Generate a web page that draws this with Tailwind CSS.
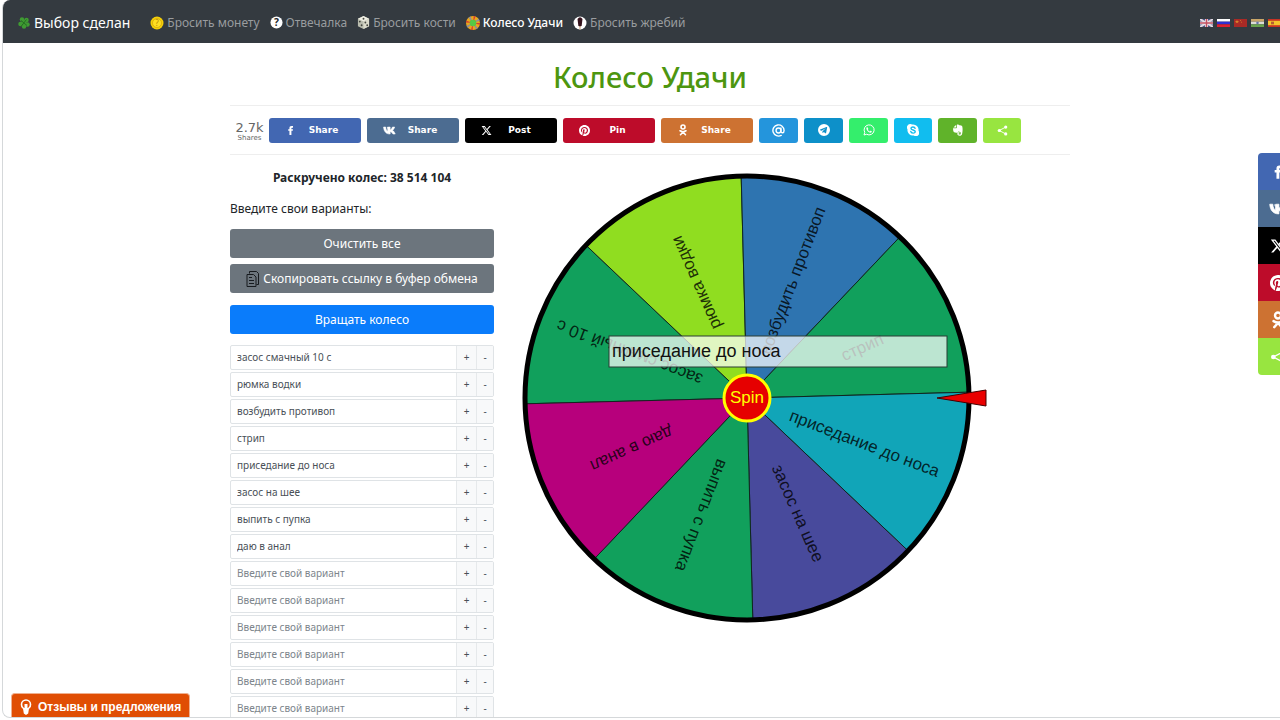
<!doctype html>
<html lang="ru">
  <head>
    <title>Колесо Удачи</title>
    <meta charset="UTF-8" />
    <meta name="viewport" content="width=device-width, initial-scale=1.0" />
    <script src="https://cdn.jsdelivr.net/npm/@tailwindcss/browser@4"></script>
  </head>
  <body class="h-screen overflow-hidden bg-white pl-[2px] pb-[2px] font-['Noto_Sans','Open_Sans',sans-serif] text-[#212529]">
    <!-- Icon sprite -->
    <svg class="hidden" xmlns="http://www.w3.org/2000/svg">
      <symbol id="facebook" viewBox="0 0 24 24">
        <path fill="currentColor" d="M14 9V7.200c0-.8.3-1.200 1.300-1.200H17.500V2.200h-3.300C11 2.200 9.700 4 9.700 6.700V9H7v3.800h2.700V22H14v-9.200h3L17.500 9z" />
      </symbol>
      <symbol id="vk" viewBox="0 0 24 24">
        <path fill="currentColor" stroke="currentColor" stroke-width="1" stroke-linejoin="round" d="M12.500 18.500C5.500 18.500 1.500 13.500 1 5.600h4c.3 4.600 2 7.200 3.700 8V9.500c0-1.500-.5-2.300-1.400-2.800.8-.9 2-1.100 3.600-1.100h2.300v5.300c1.900-.6 3.400-2.900 4.200-5.300h4.200c-.7 2.900-2.400 4.900-4 6.100 1.800 1.200 3.600 3.300 5 6.800h-4.300c-1-2.300-2.700-4-5.100-4.400v4.400z" />
      </symbol>
      <symbol id="x" viewBox="0 0 24 24">
        <path fill="currentColor" d="M18.244 2.250h3.308l-7.227 8.260 8.502 11.240H16.170l-5.214-6.817L4.990 21.750H1.680l7.730-8.835L1.254 2.250H8.080l4.713 6.231zm-1.161 17.520h1.833L7.084 4.126H5.117z" />
      </symbol>
      <symbol id="pinterest" viewBox="0 0 24 24">
        <path fill="currentColor" d="M12 0C5.373 0 0 5.372 0 12c0 5.084 3.163 9.426 7.627 11.174-.105-.949-.2-2.405.042-3.441.218-.937 1.407-5.965 1.407-5.965s-.359-.719-.359-1.782c0-1.668.967-2.914 2.171-2.914 1.023 0 1.518.769 1.518 1.690 0 1.029-.655 2.568-.994 3.995-.283 1.194.599 2.169 1.777 2.169 2.133 0 3.772-2.249 3.772-5.495 0-2.873-2.064-4.882-5.012-4.882-3.414 0-5.418 2.561-5.418 5.207 0 1.031.397 2.138.893 2.738.1.100.110.230.083.345l-.333 1.360c-.053.220-.174.267-.402.161-1.499-.698-2.436-2.889-2.436-4.649 0-3.785 2.750-7.262 7.929-7.262 4.163 0 7.398 2.967 7.398 6.931 0 4.136-2.607 7.464-6.227 7.464-1.216 0-2.359-.631-2.750-1.378l-.748 2.853c-.271 1.043-1.002 2.350-1.492 3.146C9.570 23.812 10.763 24 12 24c6.627 0 12-5.373 12-12S18.627 0 12 0z" />
      </symbol>
      <symbol id="ok" viewBox="0 0 24 24">
        <g fill="none" stroke="currentColor" stroke-width="3.200" stroke-linecap="round">
          <circle cx="12" cy="6" r="4" />
          <path d="M6 13.500q6 3.800 12 0M12 16l-5 5.500M12 16l5 5.500" />
        </g>
      </symbol>
      <symbol id="mail" viewBox="0 0 24 24">
        <g fill="none" stroke="currentColor" stroke-width="2.600" stroke-linecap="round">
          <circle cx="12" cy="12" r="4.500" />
          <path d="M16.500 7.500V13.500c0 4 5.800 3.800 5.800-1.500A10.300 10.300 0 1 0 17 21" />
        </g>
      </symbol>
      <symbol id="telegram" viewBox="0 0 24 24">
        <path fill="currentColor" fill-rule="evenodd" d="M12 0a12 12 0 1 0 0 24 12 12 0 0 0 0-24zM18.300 6.500 16.200 18c-.2.900-.7 1-1.300.7l-3.400-2.500-1.700 1.700c-.3.300-.8.200-.8-.4v-3.200l7-6.300-8.700 5.400-3-1c-.8-.3-.8-.9.100-1.200L17 6c.8-.3 1.500-.2 1.300.5z" />
      </symbol>
      <symbol id="whatsapp" viewBox="0 0 24 24">
        <path fill="none" stroke="currentColor" stroke-width="2" stroke-linejoin="round" d="M2 22l1.500-5.300A10 10 0 1 1 7.300 20.500z" />
        <path fill="currentColor" d="M8.600 6.600c-.9 0-2 1-1.800 2.700.3 3.400 4.400 7.700 7.800 8.100 1.700.2 3-.9 3-2.200 0-.5-2.200-1.700-2.700-1.500-.5.200-1 1.500-1.500 1.400-1.400-.5-3.100-2-3.800-3.600-.1-.5 1-1 1-1.600 0-.4-.9-2.600-1.200-3z" />
      </symbol>
      <symbol id="skype" viewBox="0 0 24 24">
        <path fill="currentColor" d="M7 0a6.700 6.700 0 0 1 3.400 1A11 11 0 0 1 23 13.600 6.700 6.700 0 0 1 13.600 23 11 11 0 0 1 1 10.400 6.700 6.700 0 0 1 7 0z" />
        <path fill="none" stroke="#11bdef" stroke-width="2.800" stroke-linecap="round" d="M16.200 8.600C15.500 5.500 8 5 8 8.800c0 4 8.500 2.200 8.500 6.300 0 4.200-8.300 4-9-.2" />
      </symbol>
      <symbol id="evernote" viewBox="0 0 24 24">
        <path fill="currentColor" d="M8.500 1.500v4.300c0 .9-.6 1.400-1.500 1.400H2.800zM2 8.700h5.500c1.600 0 2.500-.9 2.500-2.500V1c1.800-.3 4 0 4.500 1.700 2.200.3 5.200.5 5.900 1.600 1.300 4 .9 10.700-.1 15.200-.5 2.900-2.400 4-5 4-3.400 0-4.700-1.600-4.700-3.800 0-2.300 2-3.500 4.400-3.200v2.200c-1.300-.1-1.900.2-1.900 1.100 0 1 .9 1.400 2.200 1.400 2 0 2.200-1.200 2.200-3.200 0-1.400-.7-2.400-2.700-2.600-1 0-1.700-.2-2-.8-.3 2.400-1.700 3.400-4.200 3-3.500-.5-5.300-1.400-6-3.700-.3-1.600-.5-3.500-.6-5.200z" />
      </symbol>
      <symbol id="share" viewBox="0 0 24 24">
        <path fill="none" stroke="currentColor" stroke-width="2" d="M19 4.500 5 12l14 7.500" />
        <g fill="currentColor">
          <circle cx="19" cy="4.500" r="3.500" />
          <circle cx="5" cy="12" r="3.500" />
          <circle cx="19" cy="19.500" r="3.500" />
        </g>
      </symbol>
    </svg>

    <div class="relative -mr-[17px] h-full overflow-hidden rounded-lg border-b border-l border-[#d5d8da]">
      <!-- Navbar -->
      <nav class="flex h-[43px] items-center bg-[#343a40] pt-[2px] pl-[15px] text-xs text-[#999c9f]">
        <a href="#" class="flex items-center gap-1 text-sm text-white">
          <svg class="size-3" viewBox="0 0 24 24">
            <g fill="#3f9b32">
              <circle cx="8" cy="5" r="4.500" /><circle cx="17" cy="6" r="4.500" />
              <circle cx="5" cy="14" r="4.500" /><circle cx="19" cy="15" r="4.500" />
              <circle cx="12" cy="19" r="4.500" /><circle cx="12" cy="11" r="5" />
            </g>
            <path d="M6 7l12 10M17 5 6 19" stroke="#246f22" stroke-width="2" />
          </svg>
          Выбор сделан
        </a>
        <a href="#" class="ml-5 flex items-center gap-[3px]">
          <svg class="size-[14px]" viewBox="0 0 14 14">
            <circle cx="7" cy="7" r="6.500" fill="#f5cf08" />
            <circle cx="7" cy="7" r="4.500" fill="#ffdf22" stroke="#c99b08" stroke-width=".6" />
            <text x="7" y="10" text-anchor="middle" font-size="8" fill="#b78a06">?</text>
          </svg>
          Бросить монету
        </a>
        <a href="#" class="ml-[10px] flex items-center gap-[3px]">
          <svg class="size-[13px]" viewBox="0 0 14 14">
            <circle cx="7" cy="7" r="6.500" fill="#fff" />
            <text x="7" y="11" text-anchor="middle" font-size="11" font-weight="bold" fill="#212529">?</text>
          </svg>
          Отвечалка
        </a>
        <a href="#" class="ml-[10px] flex items-center gap-[3px]">
          <svg class="size-[13px]" viewBox="0 0 14 14">
            <path d="M1 3 7 0l6 3v8l-6 3-6-3z" fill="#b9bcae" />
            <path d="M1 3 7 0l6 3-6 3z" fill="#efeee3" />
            <path d="M7 6v8l6-3V3z" fill="#dcdccd" />
            <g fill="#44463f">
              <circle cx="7" cy="3" r="1" /><circle cx="3" cy="6" r="1" /><circle cx="5" cy="10" r="1" />
              <circle cx="9" cy="7" r="1" /><circle cx="11" cy="10" r="1" />
            </g>
          </svg>
          Бросить кости
        </a>
        <a href="#" class="ml-[10px] flex items-center gap-[3px] font-medium text-white">
          <svg class="size-[14px]" viewBox="0 0 14 14">
            <circle cx="7" cy="7" r="5" fill="none" stroke="#e9a71c" stroke-width="4" />
            <circle cx="7" cy="7" r="5" fill="none" stroke="#d83b32" stroke-width="4" stroke-dasharray="1.300 6.550" />
            <circle cx="7" cy="7" r="5" fill="none" stroke="#8b8f9c" stroke-width="4" stroke-dasharray="1.600 6.250" stroke-dashoffset="4" />
            <circle cx="7" cy="7" r="3.300" fill="#57c945" />
          </svg>
          Колесо Удачи
        </a>
        <a href="#" class="ml-[10px] flex items-center gap-[3px]">
          <svg class="size-[14px]" viewBox="0 0 14 14">
            <circle cx="7" cy="7" r="6.500" fill="#fff" />
            <path d="M4.500 3Q7-.5 9.500 3l-.8 6.500Q7 12 5.300 9.500z" fill="#35131d" />
            <path d="M6.300 10h1.400v3.500H6.300z" fill="#d8b99b" />
          </svg>
          Бросить жребий
        </a>
        <div class="ml-auto flex w-[97px] gap-1 overflow-hidden">
          <svg class="h-[8px] w-[13px] shrink-0" viewBox="0 0 13 8">
            <path fill="#4b5388" d="M0 0h13v8H0z" />
            <path stroke="#ded8df" stroke-width="2" d="m0 0 13 8M13 0 0 8" />
            <path stroke="#ece5e9" stroke-width="3" d="M6.500 0v8M0 4h13" />
            <path stroke="#c25061" stroke-width="1.500" d="M6.500 0v8M0 4h13" />
          </svg>
          <svg class="h-[8px] w-[13px] shrink-0" viewBox="0 0 13 9" preserveAspectRatio="none">
            <path fill="#fff" d="M0 0h13v3H0z" /><path fill="#2f2fd0" d="M0 3h13v3H0z" /><path fill="#e0202d" d="M0 6h13v3H0z" />
          </svg>
          <svg class="h-[8px] w-[13px] shrink-0" viewBox="0 0 13 9" preserveAspectRatio="none">
            <path fill="#a92a26" d="M0 0h13v9H0z" />
            <path fill="#d5832b" d="m3 1 .6 1.300H5l-1 1 .3 1.400L3 4l-1.300.7L2 3.300l-1-1h1.400zM6 1h1v1H6zM7 3h1v1H7z" />
          </svg>
          <svg class="h-[8px] w-[13px] shrink-0" viewBox="0 0 13 9" preserveAspectRatio="none">
            <path fill="#c9a568" d="M0 0h13v3H0z" /><path fill="#dcdcd6" d="M0 3h13v3H0z" /><path fill="#68a34d" d="M0 6h13v3H0z" />
            <circle cx="6.500" cy="4.500" r="1.300" fill="#6673a9" />
          </svg>
          <svg class="h-[8px] w-[13px] shrink-0" viewBox="0 0 13 9" preserveAspectRatio="none">
            <path fill="#c83324" d="M0 0h13v9H0z" /><path fill="#f3c52c" d="M0 2h13v5H0z" /><path fill="#b55e33" d="M3 3h3v3H3z" />
          </svg>
        </div>
      </nav>

      <main class="mx-auto w-[840px] max-w-full">
        <h1 class="mt-3 text-center text-[29px] leading-11 font-medium text-[#4d960f]">Колесо Удачи</h1>

        <!-- Share buttons -->
        <div class="mt-[6px] flex h-[50px] items-center gap-[6px] border-y border-[#eeeeee] font-['DejaVu_Sans',sans-serif] text-[9px] font-bold text-white">
          <div class="w-[33px] pt-[3px] pl-[6px] text-center font-normal text-[#666]">
            <div class="flex justify-center text-[13px] leading-3">2.7k</div>
            <div class="flex justify-center text-[7px] leading-2">Shares</div>
          </div>
          <button class="flex h-[25px] w-[92px] items-center rounded-[3px] bg-[#4267b2] pl-4"><svg class="size-[11px]"><use href="#facebook" /></svg><span class="flex-1 pt-[2px] pr-[10px] text-center">Share</span></button>
          <button class="flex h-[25px] w-[92px] items-center rounded-[3px] bg-[#4c6c91] pl-4"><svg class="size-[13px]"><use href="#vk" /></svg><span class="flex-1 pt-[2px] pr-[10px] text-center">Share</span></button>
          <button class="flex h-[25px] w-[92px] items-center rounded-[3px] bg-black pl-4"><svg class="size-[11px]"><use href="#x" /></svg><span class="flex-1 pt-[2px] pr-[10px] text-center">Post</span></button>
          <button class="flex h-[25px] w-[92px] items-center rounded-[3px] bg-[#bd0c2a] pl-4"><svg class="size-[11px]"><use href="#pinterest" /></svg><span class="flex-1 pt-[2px] pr-[10px] text-center">Pin</span></button>
          <button class="flex h-[25px] w-[92px] items-center rounded-[3px] bg-[#cd7232] pl-4"><svg class="size-3"><use href="#ok" /></svg><span class="flex-1 pt-[2px] pr-[10px] text-center">Share</span></button>
          <button aria-label="Mail.ru" class="flex h-[25px] w-[39px] items-center justify-center rounded-[3px] bg-[#2495dc]"><svg class="size-[13px]"><use href="#mail" /></svg></button>
          <button aria-label="Telegram" class="flex h-[25px] w-[39px] items-center justify-center rounded-[3px] bg-[#0d90c9]"><svg class="size-3"><use href="#telegram" /></svg></button>
          <button aria-label="WhatsApp" class="flex h-[25px] w-[39px] items-center justify-center rounded-[3px] bg-[#34ee6c]"><svg class="size-3"><use href="#whatsapp" /></svg></button>
          <button aria-label="Skype" class="flex h-[25px] w-[38px] items-center justify-center rounded-[3px] bg-[#11bdef]"><svg class="size-3"><use href="#skype" /></svg></button>
          <button aria-label="Evernote" class="flex h-[25px] w-[39px] items-center justify-center rounded-[3px] bg-[#60b32a]"><svg class="size-3"><use href="#evernote" /></svg></button>
          <button aria-label="Ещё" class="flex h-[25px] w-[38px] items-center justify-center rounded-[3px] bg-[#98e540]"><svg class="size-[11px]"><use href="#share" /></svg></button>
        </div>

        <div class="flex items-start">
          <!-- Options -->
          <section class="w-[264px] shrink-0 text-xs">
            <p class="mt-[13px] text-center leading-5 font-bold">Раскручено колес: 38 514 104</p>
            <p class="mt-[11px] leading-5">Введите свои варианты:</p>
            <button class="mt-[10px] flex h-[29px] w-full items-center justify-center rounded-[3px] bg-[#6c757d] pt-px text-white">Очистить все</button>
            <button class="mt-[6px] flex h-[29px] w-full items-center justify-center gap-1 rounded-[3px] bg-[#6c757d] pt-px text-white">
              <svg class="h-4 w-[13px]" viewBox="0 0 13 16" fill="none" stroke="#171b1f">
                <path d="M3.500 2.500V.5h7l2 2v11h-2M1 3.500h6.500l2.500 2.500v9.500H1z" />
                <path d="M3 6.500h3M3 9.500h5M3 12.500h5" />
              </svg>
              Скопировать ссылку в буфер обмена
            </button>
            <button class="mt-3 flex h-[29px] w-full items-center justify-center rounded-[3px] bg-[#0a7cfb] pt-px text-white">Вращать колесо</button>
            <div id="options" class="mt-[11px] flex flex-col gap-[2px]"></div>
          </section>

          <!-- Wheel -->
          <section class="ml-[25px] w-[480px] shrink-0 pt-[15px]">
            <svg class="w-full" viewBox="0 0 480 456" font-family="Liberation Sans, Arial, sans-serif" role="img" aria-label="Колесо">
              <g transform="translate(228 228)">
                <g id="slices" stroke="#10261f" stroke-width="1"></g>
                <circle r="222" fill="none" stroke="#000" stroke-width="5" />
                <g id="labels" font-size="17" text-anchor="middle" fill="#000" fill-opacity=".8"></g>
                <path d="M190 0 239-8V8z" fill="#ea0000" stroke="#400" stroke-width="1" />
                <rect x="-138" y="-62" width="338" height="31" fill="#fff" fill-opacity=".72" stroke="#2b3d35" />
                <text x="-135" y="-41" font-size="18" fill="#111">приседание до носа</text>
                <circle r="23" fill="#e60000" stroke="#ff0" stroke-width="3" />
                <text y="5" font-size="17" text-anchor="middle" fill="#ff0">Spin</text>
              </g>
            </svg>
          </section>
        </div>
      </main>

      <!-- Side share bar -->
      <aside class="absolute top-[153px] right-0 flex w-[39px] flex-col overflow-hidden rounded-l text-white">
        <button aria-label="Facebook" class="flex h-[37px] items-center justify-center bg-[#4267b2]"><svg class="size-4"><use href="#facebook" /></svg></button>
        <button aria-label="VK" class="flex h-[37px] items-center justify-center bg-[#4c6c91]"><svg class="size-[18px]"><use href="#vk" /></svg></button>
        <button aria-label="X" class="flex h-[37px] items-center justify-center bg-black"><svg class="size-4"><use href="#x" /></svg></button>
        <button aria-label="Pinterest" class="flex h-[37px] items-center justify-center bg-[#bd0c2a]"><svg class="size-4"><use href="#pinterest" /></svg></button>
        <button aria-label="OK" class="flex h-[37px] items-center justify-center bg-[#cd7232]"><svg class="size-[18px]"><use href="#ok" /></svg></button>
        <button aria-label="Ещё" class="flex h-[37px] items-center justify-center bg-[#98e540]"><svg class="size-4"><use href="#share" /></svg></button>
      </aside>

      <!-- Feedback tab -->
      <button class="absolute bottom-0 left-2 flex h-6 items-center gap-[6px] rounded-t border-x border-t border-[#efb08f] bg-[#e04e04] px-2 pt-[2px] font-['Liberation_Sans',sans-serif] text-[12px] font-bold text-white">
        <svg class="h-4 w-3" viewBox="0 0 12 16">
          <circle cx="6" cy="5.500" r="4.500" fill="none" stroke="#fff" stroke-width="1.600" />
          <path fill="#fff" d="M3 9.500h6l-.8 5L6 16l-2.200-1.500zM4.500 5h3v5h-3z" />
        </svg>
        Отзывы и предложения
      </button>
    </div>

    <script>
      const options = [
        { text: "засос смачный 10 с", color: "#11a05c" },
        { text: "рюмка водки", color: "#90dd20" },
        { text: "возбудить противоп", color: "#2e74b0" },
        { text: "стрип", color: "#11a05c" },
        { text: "приседание до носа", color: "#11a5b8" },
        { text: "засос на шее", color: "#484a9c" },
        { text: "выпить с пупка", color: "#11a05c" },
        { text: "даю в анал", color: "#b7007c" },
      ];
      const rowCount = 14;
      const radius = 222;
      const startAngle = 178.5;
      const step = 360 / options.length;

      let rows = "";
      for (let i = 0; i < rowCount; i++) {
        const value = options[i] ? options[i].text : "";
        rows += `
          <div class="flex h-[25px] overflow-hidden rounded-[2px] border border-[#dfe3e6] text-[10px] text-[#495057]">
            <input type="text" aria-label="Вариант ${i + 1}" value="${value}" placeholder="Введите свой вариант" class="min-w-0 flex-1 px-[6px] placeholder:text-[#7d858c]" />
            <button class="w-5 border-l border-[#e6e9eb] bg-[#f8f9fa]">+</button>
            <button class="w-[17px] border-l border-[#e6e9eb] bg-[#f8f9fa]">-</button>
          </div>`;
      }
      document.getElementById("options").innerHTML = rows;

      const point = (deg) => {
        const rad = (deg * Math.PI) / 180;
        return `${radius * Math.cos(rad)} ${radius * Math.sin(rad)}`;
      };

      let slices = "";
      let labels = "";
      options.forEach((option, i) => {
        const from = startAngle + i * step;
        slices += `<path fill="${option.color}" d="M0 0L${point(from)}A${radius} ${radius} 0 0 1 ${point(from + step)}Z" />`;
        labels += `<text transform="rotate(${from + step / 2})" x="126" y="6">${option.text}</text>`;
      });
      document.getElementById("slices").innerHTML = slices;
      document.getElementById("labels").innerHTML = labels;
    </script>
  </body>
</html>
